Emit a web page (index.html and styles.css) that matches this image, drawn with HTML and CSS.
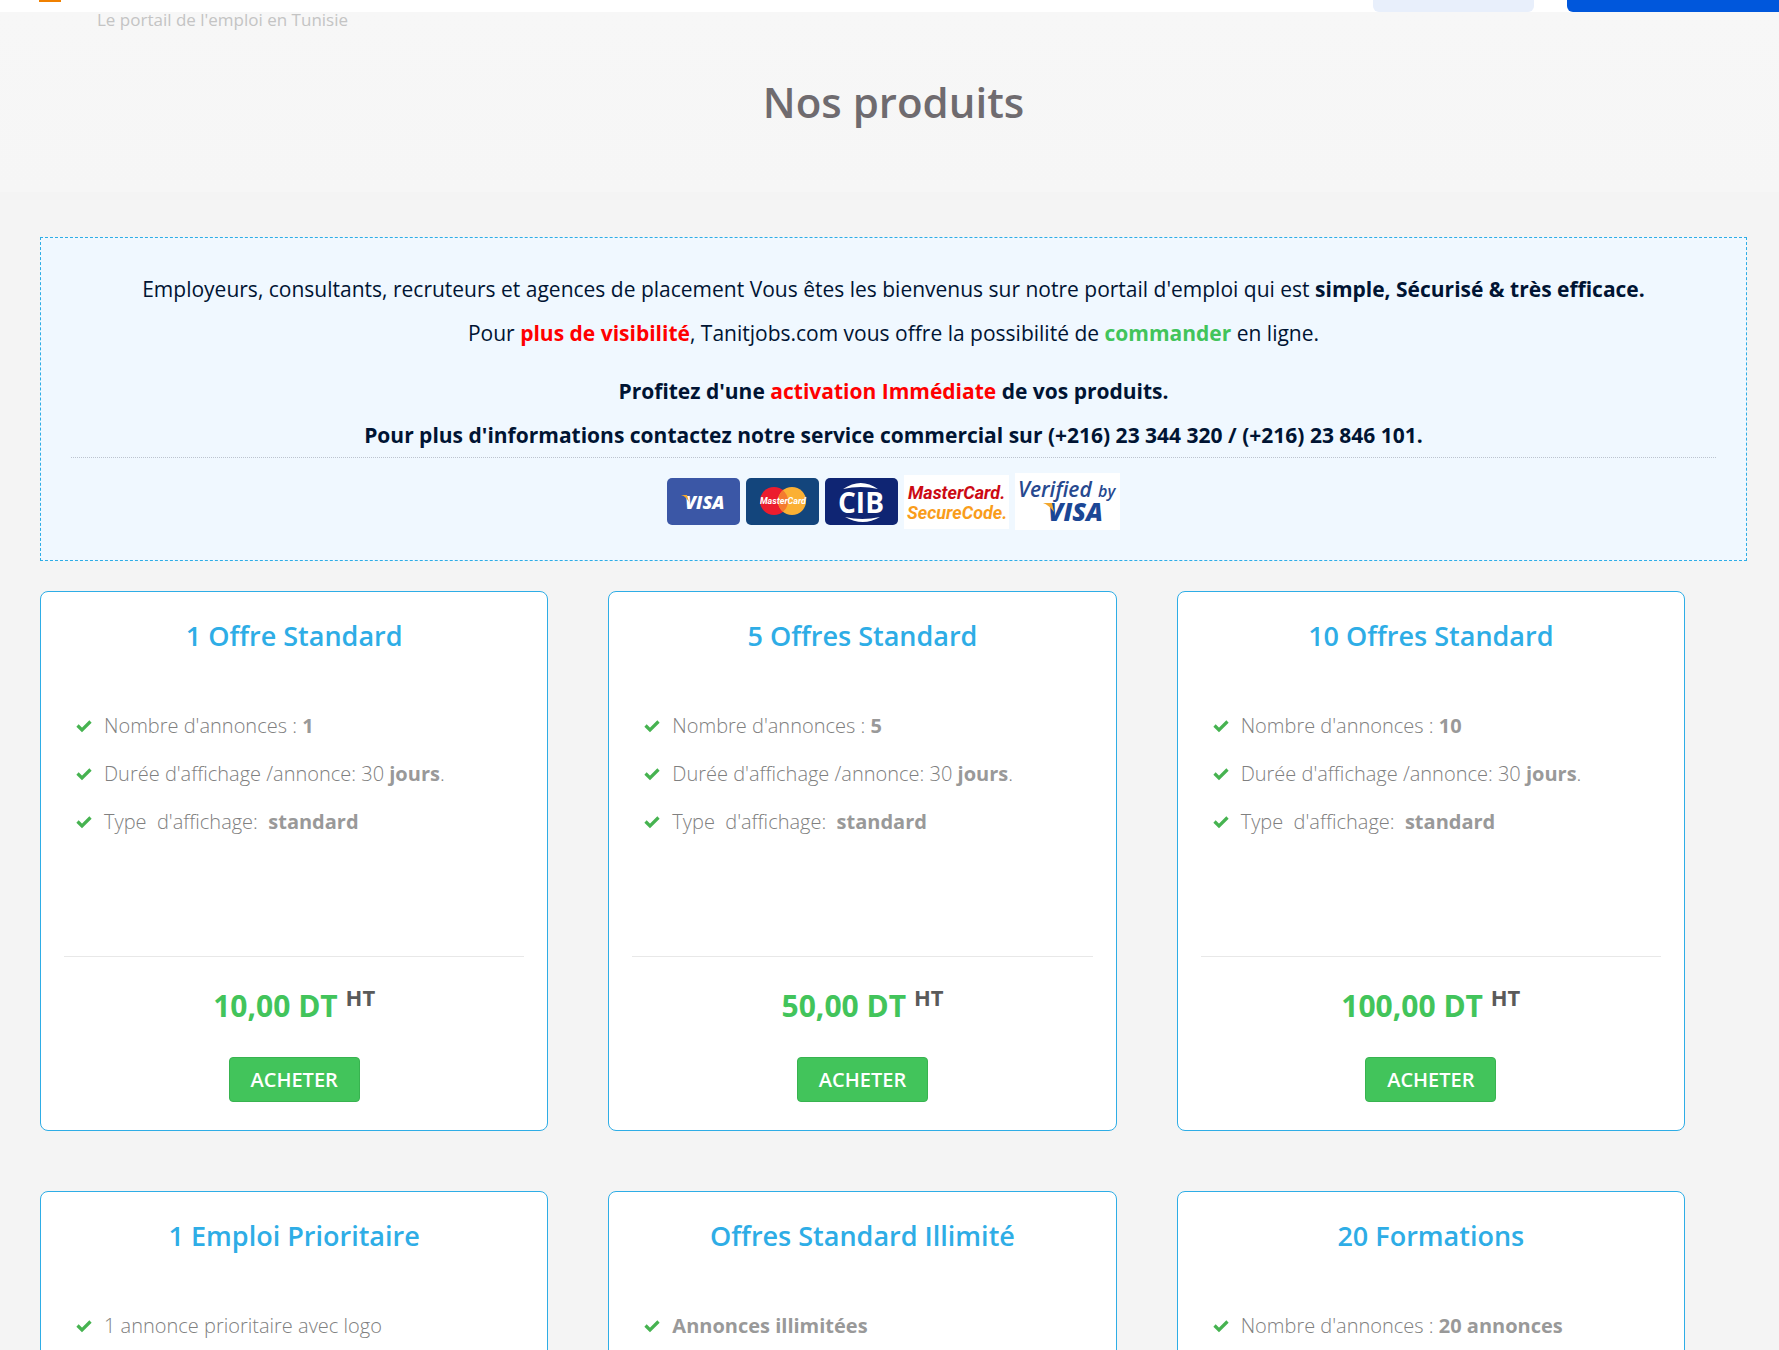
FILE: index.html
```
<!DOCTYPE html>
<html lang="fr">
	<head>
		<meta charset="UTF-8" />
		<meta name="viewport" content="width=device-width, initial-scale=1.0" />
		<title>Nos produits</title>
		<link rel="stylesheet" href="styles.css">
	</head>
	<body>
		<svg class="sprite" aria-hidden="true">
			<symbol id="check" viewBox="0 0 16 14">
				<path d="M1.500 6.500l4.500 4.500 8.500-8.500" fill="none" stroke="#46b350" stroke-width="3.200" />
			</symbol>
		</svg>
		<header class="topbar">
			<span class="logo"></span>
			<a class="nav-btn" href="#" aria-label="Connexion"></a>
			<a class="nav-btn nav-btn-primary" href="#" aria-label="Inscription"></a>
		</header>
		<div class="page-title">
			<p class="slogan">Le portail de l'emploi en Tunisie</p>
			<h1>Nos produits</h1>
		</div>
		<main class="container">
			<div class="notice">
				<p>Employeurs, consultants, recruteurs et agences de placement Vous êtes les bienvenus sur notre portail d'emploi qui est <b>simple, Sécurisé &amp; très efficace.</b><br />
				Pour <b class="red">plus de visibilité</b>, Tanitjobs.com vous offre la possibilité de <b class="green">commander</b> en ligne.</p>
				<p><b>Profitez d'une <span class="red">activation Immédiate</span> de vos produits.<br />
				Pour plus d'informations contactez notre service commercial sur (+216) 23 344 320 / (+216) 23 846 101.</b></p>
				<div class="payments">
					<svg width="73" height="47" viewBox="0 0 73 47">
						<rect width="73" height="47" rx="5" fill="#3b57a6" />
						<text x="18" y="31" class="visa" font-size="18" fill="#fff">VISA</text>
						<path d="M14 17h6l2 7c-2-3-4-6-8-7z" fill="#f2a72e" />
					</svg>
					<svg width="73" height="47" viewBox="0 0 73 47">
						<rect width="73" height="47" rx="5" fill="#13457c" />
						<circle cx="28" cy="23" r="14" fill="#ec1c2e" />
						<circle cx="46" cy="23" r="14" fill="#fbb034" />
						<path d="M37 12.300a14 14 0 0 1 0 21.400a14 14 0 0 1 0-21.400z" fill="#f47a30" />
						<text x="37" y="26" class="logo-text" font-size="9" text-anchor="middle" fill="#fff">MasterCard</text>
					</svg>
					<svg width="73" height="47" viewBox="0 0 73 47">
						<rect width="73" height="47" rx="5" fill="#0f2573" />
						<path d="M18 11q18-12 35 0q-17-4-35 0zM20 39q17 4 35 0q-17 10-35 0z" fill="#fff" />
						<text x="36" y="35" class="cib" font-size="28" text-anchor="middle" fill="#fff">CIB</text>
					</svg>
					<svg width="105" height="54" viewBox="0 0 105 54">
						<rect width="105" height="54" fill="#fff" />
						<text x="4" y="24" class="logo-text" font-size="18" fill="#cc0a14">MasterCard.</text>
						<text x="3" y="44" class="logo-text" font-size="18" fill="#f99d1b">SecureCode.</text>
					</svg>
					<svg width="105" height="57" viewBox="0 0 105 57">
						<rect width="105" height="57" fill="#fff" />
						<text x="3" y="24" class="verified" font-size="21" fill="#27498f">Verified</text>
						<text x="83" y="24" class="verified" font-size="16" fill="#27498f">by</text>
						<text x="33" y="48" class="visa" font-size="25" fill="#1b4795">VISA</text>
						<path d="M28 30h9l2 9c-3-4-6-7-11-9z" fill="#f2a72e" />
					</svg>
				</div>
			</div>
			<div class="products">
				<section class="card">
					<h2>1 Offre Standard</h2>
					<ul>
						<li><svg><use href="#check" /></svg><span>Nombre d'annonces : <b>1</b></span></li>
						<li><svg><use href="#check" /></svg><span>Durée d'affichage /annonce: 30 <b>jours</b>.</span></li>
						<li><svg><use href="#check" /></svg><span>Type&nbsp; d'affichage:&nbsp; <b>standard</b></span></li>
					</ul>
					<div class="price">10,00 DT <sup>HT</sup></div>
					<button type="button">ACHETER</button>
				</section>
				<section class="card">
					<h2>5 Offres Standard</h2>
					<ul>
						<li><svg><use href="#check" /></svg><span>Nombre d'annonces : <b>5</b></span></li>
						<li><svg><use href="#check" /></svg><span>Durée d'affichage /annonce: 30 <b>jours</b>.</span></li>
						<li><svg><use href="#check" /></svg><span>Type&nbsp; d'affichage:&nbsp; <b>standard</b></span></li>
					</ul>
					<div class="price">50,00 DT <sup>HT</sup></div>
					<button type="button">ACHETER</button>
				</section>
				<section class="card">
					<h2>10 Offres Standard</h2>
					<ul>
						<li><svg><use href="#check" /></svg><span>Nombre d'annonces : <b>10</b></span></li>
						<li><svg><use href="#check" /></svg><span>Durée d'affichage /annonce: 30 <b>jours</b>.</span></li>
						<li><svg><use href="#check" /></svg><span>Type&nbsp; d'affichage:&nbsp; <b>standard</b></span></li>
					</ul>
					<div class="price">100,00 DT <sup>HT</sup></div>
					<button type="button">ACHETER</button>
				</section>
				<section class="card">
					<h2>1 Emploi Prioritaire</h2>
					<ul>
						<li><svg><use href="#check" /></svg><span>1 annonce prioritaire avec logo</span></li>
					</ul>
				</section>
				<section class="card">
					<h2>Offres Standard Illimité</h2>
					<ul>
						<li><svg><use href="#check" /></svg><span><b>Annonces illimitées</b></span></li>
					</ul>
				</section>
				<section class="card">
					<h2>20 Formations</h2>
					<ul>
						<li><svg><use href="#check" /></svg><span>Nombre d'annonces : <b>20 annonces</b></span></li>
					</ul>
				</section>
			</div>
		</main>
	</body>
</html>
```
FILE: styles.css
```
* {
	margin: 0;
	padding: 0;
	box-sizing: border-box;
}
body {
	background-color: #f4f4f4;
	font-family: "Open Sans", sans-serif;
	color: #001433;
}
.sprite {
	display: none;
}
.topbar {
	height: 12px;
	padding-left: 39px;
	display: flex;
	background-color: #fff;
}
.logo {
	width: 22px;
	height: 2px;
	margin-right: auto;
	background-color: #f08000;
}
.nav-btn {
	width: 161px;
	margin-right: 33px;
	border-radius: 0 0 6px 6px;
	background-color: #e8effb;
}
.nav-btn-primary {
	width: 212px;
	margin-right: 0;
	border-radius: 0 0 0 6px;
	background-color: #0057dc;
}
.page-title {
	padding-bottom: 59px;
	background: linear-gradient(#f7f7f7, #f6f6f6);
}
.slogan {
	padding: 0 0 43px 97px;
	font-size: 17px;
	line-height: 16px;
	color: #c4c4c4;
}
.page-title h1 {
	padding: 0 32px 0 40px;
	text-align: center;
	font-size: 42px;
	font-weight: 600;
	line-height: 62px;
	color: #6f6b6f;
}
.container {
	padding: 45px 32px 60px 40px;
}
.notice {
	padding: 29px 30px 30px;
	border: 1px dashed #2eade6;
	background-color: #f0f8ff;
	font-size: 21px;
	line-height: 44px;
	text-align: center;
}
.notice p + p {
	margin-top: 14px;
}
.red {
	color: #f00;
}
.green {
	color: #42c45b;
}
.payments {
	padding-top: 15px;
	border-top: 1px dotted #bcc4cf;
	display: flex;
	justify-content: center;
	align-items: center;
	gap: 6px;
}
.visa, .verified {
	font-style: italic;
	font-weight: 800;
}
.logo-text {
	font-family: Roboto, sans-serif;
	font-style: italic;
	font-weight: 700;
}
.verified {
	font-weight: 600;
}
.cib {
	font-weight: 700;
}
.products {
	margin-top: 30px;
	padding-right: 62px;
	display: grid;
	grid-template-columns: repeat(3, 1fr);
	gap: 60px;
}
.card {
	min-height: 540px;
	padding: 20px 23px 27px;
	border: 1px solid #2eade6;
	border-radius: 8px;
	background-color: #fff;
	text-align: center;
}
.card h2 {
	font-size: 27px;
	font-weight: 600;
	line-height: 48px;
	color: #2eade6;
}
.card ul {
	min-height: 296px;
	padding: 42px 12px 0;
	list-style: none;
	text-align: left;
}
.card li {
	display: flex;
	align-items: center;
	gap: 12px;
	font-size: 20px;
	font-weight: 300;
	line-height: 48px;
	color: #808080;
}
.card li b {
	font-weight: 700;
	color: #999;
}
.card li svg {
	width: 16px;
	height: 14px;
}
.price {
	padding: 25px 0 27px;
	border-top: 1px solid #e8e8e8;
	font-size: 30px;
	font-weight: 700;
	line-height: 48px;
	color: #42c45b;
}
.price sup {
	font-size: 22px;
	font-weight: 700;
	line-height: 0;
	color: #5a5a5a;
}
.card button {
	height: 45px;
	padding: 0 21px;
	border: 1px solid #38b350;
	border-radius: 4px;
	background-color: #42c45b;
	color: #fff;
	font-family: inherit;
	font-size: 20px;
	font-weight: 600;
	cursor: pointer;
}
```
